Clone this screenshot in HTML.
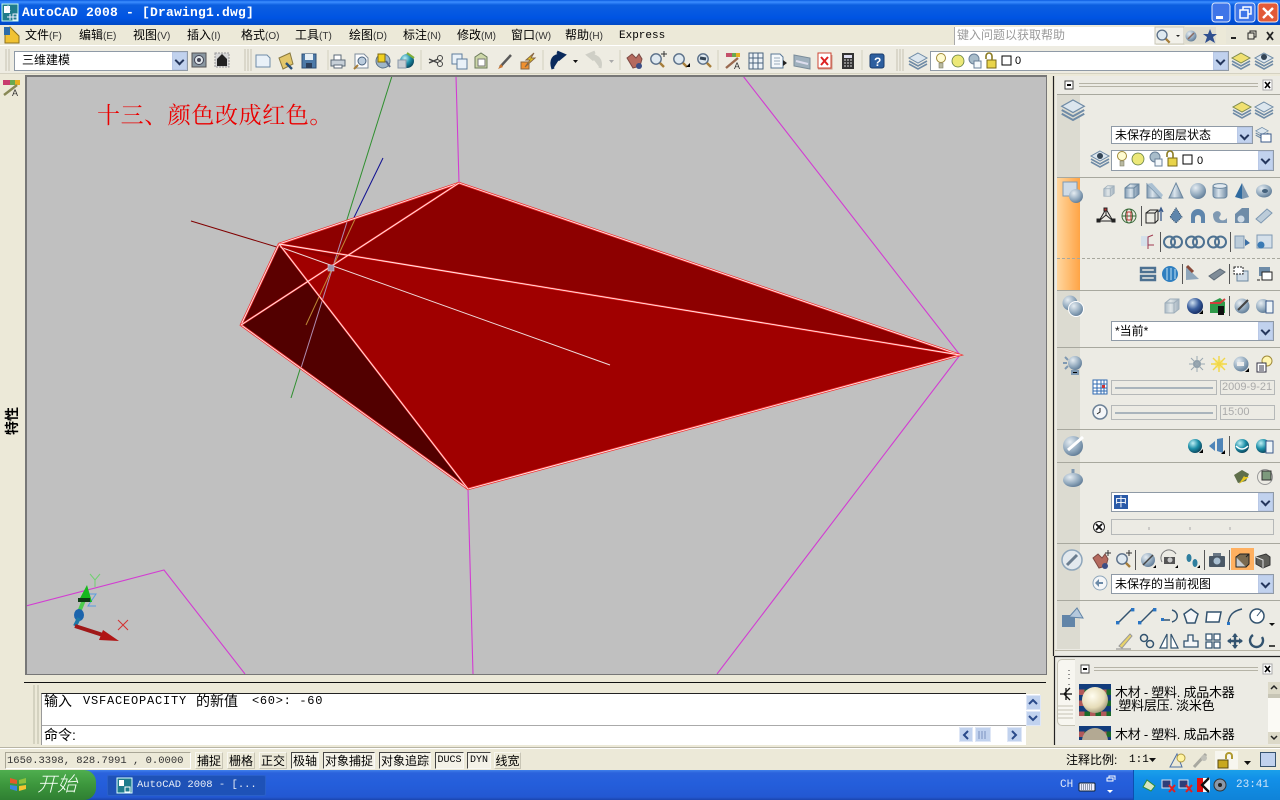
<!DOCTYPE html>
<html lang="zh"><head><meta charset="utf-8"><title>AutoCAD 2008</title>
<style>
html,body{margin:0;padding:0;width:1280px;height:800px;overflow:hidden;background:#ece9d8}
body{position:relative;font-family:"Liberation Sans","WenQuanYi Zen Hei","Noto Sans CJK SC",sans-serif;font-size:12px;color:#000}
div,span{position:absolute;box-sizing:border-box;white-space:nowrap}
.m{top:28px;font-size:12px;line-height:15px}
.m i{font-style:normal;font-size:10px;color:#333;position:static}
.combo{background:#fff;border:1px solid #8f9aa6;line-height:17px;padding-left:3px}
.dd{position:absolute;right:0;top:0;bottom:0;width:15px;background:#c1d2ee;border:1px solid #b9c8e6}
.dd:after{content:"";position:absolute;left:3px;top:4px;width:5px;height:5px;border:solid #24365c;border-width:0 2px 2px 0;transform:rotate(45deg)}
.sb{top:752px;height:17px;line-height:16px;text-align:center;font-size:12px;background:#ece9d8;border:1px solid #f8f7f0;border-bottom-color:#c8c5b5;border-right-color:#c8c5b5}
.on{border-color:#444 #f8f8f4 #f8f8f4 #444;background:#f4f2e8}
.sep{left:1057px;width:223px;height:1px;background:#a8a89e}
.mono{font-family:"Liberation Mono","WenQuanYi Zen Hei",monospace}
.scr{background:#c1d2ee;border:1px solid #dfe7f6}
.fld{background:#ecebe4;border:1px solid #b5b8b8;color:#aaa;font-size:11px;line-height:13px;padding-left:1px}
.tr{position:absolute;left:3px;right:3px;top:50%;height:2px;margin-top:-1px;background:#a9b4bc}
</style></head><body>
<div style="left:0;top:0;width:1280px;height:25px;background:linear-gradient(#0a5be0 0,#3c8eff 2px,#0c5fe0 5px,#0054e3 18px,#0049c5 25px)"></div>
<div class="mono" style="left:22px;top:5px;color:#fff;font-weight:bold;font-size:13px;letter-spacing:.2px;line-height:15px">AutoCAD 2008 - [Drawing1.dwg]</div>

<div class="m" style="left:25px">文件<i>(F)</i></div><div class="m" style="left:79px">编辑<i>(E)</i></div><div class="m" style="left:133px">视图<i>(V)</i></div><div class="m" style="left:187px">插入<i>(I)</i></div><div class="m" style="left:241px">格式<i>(O)</i></div><div class="m" style="left:295px">工具<i>(T)</i></div><div class="m" style="left:349px">绘图<i>(D)</i></div><div class="m" style="left:403px">标注<i>(N)</i></div><div class="m" style="left:457px">修改<i>(M)</i></div><div class="m" style="left:511px">窗口<i>(W)</i></div><div class="m" style="left:565px">帮助<i>(H)</i></div>
<div class="mono m" style="left:619px;font-size:11px;top:29px">Express</div>
<div style="left:954px;top:27px;width:202px;height:18px;background:#fff;border-left:1px solid #aaa;color:#9a9a9a;padding-left:2px;line-height:16px">键入问题以获取帮助</div>
<div style="left:0;top:45px;width:1280px;height:29px;background:#eeece2;border-top:1px solid #fff;border-bottom:1px solid #d5d2c2"></div>
<div class="combo" style="left:14px;top:51px;width:174px;height:20px;padding-left:7px">三维建模<span class="dd"></span></div>
<div class="combo" style="left:930px;top:51px;width:299px;height:20px"><span style="left:84px;top:1px;font-size:11px">0</span><span class="dd"></span></div>

<!-- left strip -->
<div style="left:-3px;top:414px;width:30px;height:14px;line-height:14px;font-size:14px;font-weight:bold;text-align:center;transform:rotate(-90deg)">特性</div>

<!-- viewport -->
<div style="left:25px;top:75px;width:1022px;height:600px;background:#c0c0c0;border:1px solid #777;border-width:2px 1px 1px 2px"></div>
<div style="left:97px;top:101px;font-family:'Liberation Serif','Noto Serif CJK SC',serif;font-size:23px;letter-spacing:.6px;line-height:30px;color:#ea0000">十三、颜色改成红色。</div>

<!-- command area -->
<div style="left:41px;top:693px;width:985px;height:52px;background:#fff;border-top:1px solid #222;border-left:1px solid #999"></div>
<div style="left:42px;top:725px;width:984px;height:1px;background:#aaa"></div>
<div style="left:1026px;top:694px;width:14px;height:32px;background:#fff"></div>
<div style="left:44px;top:694px;font-size:14px;line-height:15px">输入</div>
<div class="mono" style="left:83px;top:694px;font-size:12px;line-height:15px;letter-spacing:.8px">VSFACEOPACITY</div>
<div style="left:196px;top:694px;font-size:14px;line-height:15px">的新值</div>
<div class="mono" style="left:252px;top:694px;font-size:12px;line-height:15px;letter-spacing:.7px">&lt;60&gt;: -60</div>
<div style="left:44px;top:727px;font-size:14px;line-height:16px">命令:</div>
<div class="scr" style="left:1026px;top:695px;width:15px;height:15px"></div>
<div class="scr" style="left:1026px;top:711px;width:15px;height:15px"></div>
<div class="scr" style="left:959px;top:727px;width:14px;height:15px"></div>
<div class="scr" style="left:975px;top:727px;width:16px;height:15px"></div>
<div class="scr" style="left:1007px;top:727px;width:15px;height:15px"></div>

<!-- status bar -->
<div style="left:0;top:747px;width:1280px;height:1px;background:#b8b5a5"></div>
<div style="left:0;top:748px;width:1280px;height:1px;background:#fff"></div>
<div class="mono" style="left:5px;top:752px;width:186px;height:17px;border:1px solid;border-color:#a9a696 #fff #fff #a9a696;font-size:10.500px;line-height:16px;padding-left:1px;color:#333">1650.3398, 828.7991 , 0.0000</div>
<div class="sb" style="left:195px;width:28px">捕捉</div><div class="sb" style="left:227px;width:28px">栅格</div><div class="sb" style="left:259px;width:28px">正交</div>
<div class="sb on" style="left:291px;width:28px">极轴</div><div class="sb on" style="left:323px;width:52px">对象捕捉</div><div class="sb on" style="left:379px;width:52px">对象追踪</div>
<div class="sb on mono" style="left:435px;width:29px;font-size:10px">DUCS</div><div class="sb on mono" style="left:467px;width:24px;font-size:10px">DYN</div><div class="sb" style="left:494px;width:27px">线宽</div>
<div style="left:1066px;top:753px;line-height:15px">注释比例:</div>
<div class="mono" style="left:1129px;top:753px;line-height:15px;font-size:11px">1:1</div>
<div style="left:1215px;top:751px;width:23px;height:18px;background:#f7f6ef"></div>

<!-- taskbar -->
<div style="left:0;top:770px;width:1280px;height:30px;background:linear-gradient(#3f80ea 0,#2a62dc 3px,#245edb 14px,#2358d2 27px,#1a45ae 30px)"></div>
<div style="left:0;top:770px;width:96px;height:30px;background:linear-gradient(#4fae4f,#3c963c 50%,#2f7f32);border-radius:0 12px 12px 0"></div>
<div style="left:37px;top:772px;color:#f5fff5;font-size:20px;line-height:26px;font-style:italic;font-weight:300">开始</div>
<div style="left:107px;top:775px;width:159px;height:21px;background:#1e52b7;border-radius:2px;border:1px solid #2a60c8"></div>
<div class="mono" style="left:137px;top:778px;color:#e8eef8;font-size:10.500px;line-height:15px">AutoCAD 2008 - [...</div>
<div class="mono" style="left:1060px;top:778px;color:#e0e8f8;font-size:11px;line-height:15px">CH</div>
<div style="left:1133px;top:770px;width:147px;height:30px;background:linear-gradient(#1aa0ea,#1290e8 30%,#0f83d8);border-left:1px solid #0c4fb0"></div>
<div class="mono" style="left:1236px;top:778px;color:#cfe4f7;font-size:11px;line-height:15px">23:41</div>

<!-- right panel -->
<div style="left:1055px;top:76px;width:225px;height:580px;background:#ecebe4"></div>
<div style="left:1057px;top:95px;width:23px;height:554px;background:#dcdbd1"></div>
<div style="left:1057px;top:178px;width:23px;height:112px;background:linear-gradient(90deg,#ffd7a0,#ffa445)"></div>
<div class="sep" style="top:94px"></div><div class="sep" style="top:177px"></div><div class="sep" style="top:290px"></div><div class="sep" style="top:347px"></div><div class="sep" style="top:429px"></div><div class="sep" style="top:462px"></div><div class="sep" style="top:543px"></div><div class="sep" style="top:600px"></div>
<div style="left:1057px;top:258px;width:223px;border-top:1px dashed #a8a89e"></div>
<div style="left:1055px;top:650px;width:225px;height:1px;background:#b8b5a5"></div>
<div style="left:1231px;top:548px;width:23px;height:22px;background:#ffb060"></div>
<div class="combo" style="left:1111px;top:126px;width:142px;height:18px;font-size:12px;line-height:16px">未保存的图层状态<span class="dd"></span></div>
<div class="combo" style="left:1111px;top:150px;width:163px;height:21px"><span style="left:85px;top:2px;font-size:11px">0</span><span class="dd"></span></div>
<div class="combo" style="left:1111px;top:321px;width:163px;height:20px;line-height:18px">*当前*<span class="dd"></span></div>
<div class="fld" style="left:1111px;top:380px;width:106px;height:15px"><span class="tr"></span></div>
<div class="fld" style="left:1220px;top:380px;width:55px;height:15px">2009-9-21</div>
<div class="fld" style="left:1111px;top:405px;width:106px;height:15px"><span class="tr"></span></div>
<div class="fld" style="left:1220px;top:405px;width:55px;height:15px">15:00</div>
<div class="combo" style="left:1111px;top:492px;width:163px;height:20px"><span style="left:2px;top:2px;width:14px;height:14px;background:#2a5aa8;color:#fff;line-height:14px;text-align:center">中</span><span class="dd"></span></div>
<div class="fld" style="left:1111px;top:519px;width:163px;height:16px"></div>
<div class="combo" style="left:1111px;top:574px;width:163px;height:20px;line-height:18px">未保存的当前视图<span class="dd"></span></div>

<!-- material palette -->
<div style="left:1055px;top:657px;width:225px;height:88px;background:#ecebe4"></div>
<div style="left:1057px;top:659px;width:18px;height:67px;background:#f7f6f0;border:1px solid #c5c3b5;border-radius:5px 0 0 5px;border-right:0"></div>
<div style="left:1115px;top:686px;font-size:13px;letter-spacing:-.25px;line-height:14px">木材 - 塑料. 成品木器</div>
<div style="left:1115px;top:699px;font-size:13px;letter-spacing:-.25px;line-height:14px">.塑料层压. 淡米色</div>
<div style="left:1115px;top:728px;font-size:13px;letter-spacing:-.25px;line-height:14px">木材 - 塑料. 成品木器</div>
<div style="left:1079px;top:684px;width:32px;height:32px;background:repeating-conic-gradient(#123c7c 0 25%,#1a6a2a 0 50%,#b0595a 0 75%,#123c7c 0 100%) 0 0/11px 11px"></div>
<div style="left:1079px;top:726px;width:32px;height:14px;background:repeating-conic-gradient(#123c7c 0 25%,#1a6a2a 0 50%,#b0595a 0 75%,#123c7c 0 100%) 0 0/11px 11px;overflow:hidden"><span style="left:3px;top:2px;width:26px;height:26px;border-radius:50%;background:#b3a993"></span></div>
<div style="left:1268px;top:682px;width:12px;height:62px;background:#fbfaf5"></div>
<div style="left:1268px;top:682px;width:12px;height:12px;background:#dcd9c8"></div>
<div style="left:1268px;top:694px;width:12px;height:4px;background:#c7c5b5"></div>
<div style="left:1268px;top:732px;width:12px;height:12px;background:#dcd9c8"></div>

<svg style="position:absolute;left:0;top:0" width="1280" height="800" viewBox="0 0 1280 800">
<defs>
<radialGradient id="gs" cx=".35" cy=".3" r=".8"><stop offset="0" stop-color="#e6edf2"/><stop offset=".6" stop-color="#8ea6bb"/><stop offset="1" stop-color="#56728e"/></radialGradient>
<radialGradient id="gb" cx=".35" cy=".3" r=".8"><stop offset="0" stop-color="#cfe0f0"/><stop offset=".5" stop-color="#3b5f9e"/><stop offset="1" stop-color="#0d2257"/></radialGradient>
<radialGradient id="gt" cx=".35" cy=".3" r=".8"><stop offset="0" stop-color="#bff0f5"/><stop offset=".5" stop-color="#1d8fa8"/><stop offset="1" stop-color="#08384f"/></radialGradient>
<radialGradient id="gm" cx=".4" cy=".35" r=".75"><stop offset="0" stop-color="#fffdf0"/><stop offset=".6" stop-color="#e6dcb8"/><stop offset="1" stop-color="#8d8468"/></radialGradient>
<linearGradient id="gc" x1="0" x2="1"><stop offset="0" stop-color="#7f99b2"/><stop offset=".4" stop-color="#dbe5ec"/><stop offset="1" stop-color="#6f8aa4"/></linearGradient>
<g id="lay"><path d="M0-8 9-3 0 2-9-3Z" fill="#dce6ee" stroke="#6f8ba6"/><path d="M-9 0 0 5 9 0M-9 3 0 8 9 3" fill="none" stroke="#6f8ba6" stroke-width="1.6"/></g>
<g id="layy"><path d="M0-8 9-3 0 2-9-3Z" fill="#f0e070" stroke="#7d8a50"/><path d="M-9 0 0 5 9 0M-9 3 0 8 9 3" fill="none" stroke="#6f8ba6" stroke-width="1.6"/></g>
<g id="cube"><path d="M-7-3-2-7H7V3L2 7H-7Z" fill="url(#gc)" stroke="#6b879f"/><path d="M-7-3H2V7M2-3 7-7" fill="none" stroke="#6b879f"/></g>
<g id="sph"><circle r="8" fill="url(#gs)"/></g>
<g id="cyl"><rect x="-7" y="-7" width="14" height="14" rx="3" fill="url(#gc)" stroke="#6b879f"/><ellipse cy="-5" rx="7" ry="2.400" fill="#e2eaf0" stroke="#6b879f"/></g>
<g id="tri"><path d="M0-8 7 7H-7Z" fill="url(#gc)" stroke="#6c879f"/></g>
<g id="tor"><ellipse rx="8" ry="6.500" fill="url(#gs)"/><ellipse cx="1" rx="3" ry="2" fill="#44617c"/></g>
<g id="bub"><circle r="7" fill="url(#gt)"/><path d="M4 7 8 3V7Z" fill="#000"/></g>
<g id="rings"><circle cx="-3.500" r="5.500" fill="none" stroke="#4d7191" stroke-width="2"/><circle cx="3.500" r="5.500" fill="none" stroke="#4d7191" stroke-width="2"/></g>
<g id="bulb"><circle cy="-3" r="4.500" fill="#fffbd0" stroke="#a08a3a"/><rect x="-2" y="2" width="4" height="5" fill="#b9b9a0" stroke="#80806a" stroke-width=".6"/></g>
<g id="sun"><circle r="7.500" fill="#ece878" stroke="#5f7a40"/></g>
<g id="lock"><rect x="-5" y="-1" width="9" height="8" fill="#e9d44a" stroke="#7a6a18"/><path d="M-6-2V-5A3 3 0 0 1 0-5V-1" fill="none" stroke="#8a7a20" stroke-width="1.600"/></g>
<g id="doc"><path d="M-6-7H3L6-4V7H-6Z" fill="#f4f8fb" stroke="#5a7896"/><path d="M-3-3H3M-3 0H3M-3 3H3" stroke="#99aabb"/></g>
<g id="mag"><circle cx="-1" cy="-1" r="5.200" fill="#dfe9f0" stroke="#5a6f88" stroke-width="1.400"/><path d="M3 3 7 7" stroke="#a67e3a" stroke-width="2.400"/></g>
<g id="hand"><path d="M-8-3-3-7 1-3 4-7 7-2 5 5-2 7Z" fill="#b56a5e" stroke="#7c4a44"/><circle cx="4" cy="5" r="3" fill="#3c4f86"/></g>
<g id="pgrey"><path d="M-6-7H3L7-3V7H-6Z" fill="#fbfcfe" stroke="#7d8b9b"/></g>
<g id="lin"><path d="M-7 7 7-7" stroke="#33536f" stroke-width="1.500"/><rect x="-9" y="5" width="3.400" height="3.400" fill="#2a75c4"/><rect x="6" y="-8" width="3.400" height="3.400" fill="#2a75c4"/></g>
</defs>

<!-- title icon & window buttons -->
<rect x="2" y="4" width="16" height="17" fill="#1f7c8c" stroke="#cfe"/><rect x="4" y="6" width="6" height="7" fill="#fff"/><path d="M6 11 8 6 10 11M10 14V20M7 17H17M13 14H17V20H13Z" stroke="#eef" fill="none"/>
<rect x="1212" y="3" width="18" height="19" rx="3" fill="#3f75e8" stroke="#dce7fb"/><rect x="1216" y="16" width="7" height="3" fill="#fff"/>
<rect x="1235" y="3" width="20" height="19" rx="3" fill="#3f75e8" stroke="#dce7fb"/><path d="M1240 10H1248V18H1240ZM1243 10V7H1251V14H1248" fill="none" stroke="#fff" stroke-width="1.500"/>
<rect x="1258" y="3" width="20" height="19" rx="3" fill="#e25a38" stroke="#fbe5dc"/><path d="M1263 8 1273 18M1273 8 1263 18" stroke="#fff" stroke-width="2.400"/>

<!-- menu icon -->
<path d="M5 43V30L10 27 19 36V43Z" fill="#f1c232" stroke="#8a7020"/><rect x="4" y="27" width="6" height="8" fill="#2d6ca8"/>
<!-- help area -->
<rect x="1155" y="27" width="29" height="17" fill="#f2f1ea" stroke="#c9c7b8"/>
<use href="#mag" transform="translate(1163,36) scale(.95)"/><path d="M1176 35h4l-2 2z" fill="#222"/>
<rect x="1184" y="27" width="32" height="17" fill="#dfddd0"/>
<circle cx="1191" cy="36" r="5.500" fill="url(#gs)"/><path d="M1188 39 1194 33" stroke="#8a6a60" stroke-width="1.500"/><path d="M1210 29l2 5h5l-4 3 2 6-5-3-5 3 2-6-4-3h5z" fill="#2f4f8f"/>
<rect x="1226" y="27" width="54" height="17" fill="#e8e6d8"/>
<path d="M1231 38h5" stroke="#222" stroke-width="2"/><path d="M1248 33h6v6h-6zM1250 33v-2h6v6h-2" fill="none" stroke="#222"/><path d="M1267 32 1273 40M1273 32 1267 40" stroke="#222" stroke-width="1.800"/>

<!-- toolbar grips -->
<path d="M6 49V71M9 49V71M245 49V71M248 49V71M251 49V71M897 49V71M900 49V71M903 49V71" stroke="#c5c2b2"/>
<path d="M328 50V70M421 50V70M543 50V70M620 50V70M718 50V70M862 50V70" stroke="#d2cfbf"/>
<!-- toolbar icons -->
<g transform="translate(199,60)"><rect x="-7" y="-7" width="14" height="14" fill="#8a98a2" stroke="#555"/><circle r="4.500" fill="#dfe6ea" stroke="#445"/><circle r="2" fill="#445"/></g>
<g transform="translate(222,60)"><rect x="-7" y="-7" width="14" height="14" fill="#d8d8d8" stroke="#999" stroke-dasharray="2 1"/><path d="M-5 6V-1L0-6 5-1V6Z" fill="#222"/></g>
<g transform="translate(263,61)"><path d="M-7-6H4L7-3V6H-7Z" fill="#e9f1f8" stroke="#6f8ca8"/></g>
<g transform="translate(286,61)"><path d="M-7-3 4-8 7 3-3 8Z" fill="#e2c66a" stroke="#8a7a40"/><path d="M0 2 6 8" stroke="#274f7a" stroke-width="2.400"/></g>
<g transform="translate(309,61)"><rect x="-7" y="-7" width="14" height="14" fill="#4d7aa8" stroke="#2d4f77"/><rect x="-4" y="-7" width="8" height="6" fill="#e5eef5"/><rect x="-3" y="2" width="6" height="5" fill="#2b3f5c"/></g>
<g transform="translate(338,61)"><rect x="-7" y="-1" width="14" height="6" fill="#c7d0d8" stroke="#5c6a78"/><rect x="-4" y="-6" width="7" height="5" fill="#fff" stroke="#5c6a78"/><rect x="-4" y="4" width="8" height="3" fill="#fff" stroke="#5c6a78"/></g>
<g transform="translate(361,61)"><use href="#pgrey"/><circle cx="1" cy="0" r="4" fill="#bcd" stroke="#48617c"/><path d="M-3 4-7 8" stroke="#a67e3a" stroke-width="2"/></g>
<g transform="translate(383,61)"><circle r="7" fill="#9fb6c9" stroke="#5a7288"/><rect x="-5" y="-7" width="7" height="8" fill="#f0d020" stroke="#806a10"/><path d="M3 0 7 6" stroke="#55678a" stroke-width="2"/></g>
<g transform="translate(407,61)"><circle r="7" fill="url(#gt)"/><rect x="-9" y="-1" width="8" height="8" fill="#c8cdd2" stroke="#8a98a8"/><path d="M0-8 7-3" stroke="#7fae3a" stroke-width="2"/></g>
<g transform="translate(436,61)" fill="none" stroke="#444"><circle cx="4" cy="-3" r="2.500"/><circle cx="4" cy="3" r="2.500"/><path d="M2-2-7 2M2 2-7-2" stroke-width="1.300"/></g>
<g transform="translate(459,61)"><rect x="-7" y="-7" width="10" height="10" fill="#e9f1f8" stroke="#5e7d9c"/><rect x="-2" y="-2" width="10" height="10" fill="#e9f1f8" stroke="#5e7d9c"/></g>
<g transform="translate(481,61)"><path d="M-6-4 0-8 6-4V7H-6Z" fill="#cdd7a8" stroke="#6b7a5a"/><rect x="-3" y="-2" width="7" height="7" fill="#fff" stroke="#777"/></g>
<g transform="translate(505,61)"><path d="M-5 6 6-6" stroke="#5a5a5a" stroke-width="2.500"/><path d="M-7 8-4 3-2 6Z" fill="#c73"/></g>
<g transform="translate(528,61)"><rect x="-7" y="1" width="8" height="7" fill="#f09030" stroke="#864"/><path d="M6-8-2-1H2L-3 6 7-3H3Z" fill="#e8c820" stroke="#864"/></g>
<path d="M553 69C550 60 553 55 562 55M557 52 564 55 558 60" fill="#0a2a5c" stroke="#0a2a5c" stroke-width="3"/><path d="M573 60h5l-2.500 3z" fill="#111"/>
<path d="M600 68C602 60 598 56 590 55M595 52 588 55 594 60" fill="#cfcfc6" stroke="#cfcfc6" stroke-width="3"/><path d="M609 60h5l-2.500 3z" fill="#aaa"/>
<use href="#hand" transform="translate(635,61)"/>
<use href="#mag" transform="translate(657,60)"/><path d="M661 54h6M664 51v6" stroke="#333"/>
<use href="#mag" transform="translate(680,60)"/><path d="M686 67h4v-4z" fill="#000"/>
<use href="#mag" transform="translate(704,60)"/><path d="M700 58l6 1" stroke="#345" stroke-width="3"/>
<g transform="translate(733,61)"><rect x="-7" y="-8" width="14" height="4" fill="#c4506a"/><rect x="-1" y="-8" width="4" height="4" fill="#6aa84f"/><rect x="3" y="-8" width="4" height="4" fill="#e6b020"/><path d="M-7 7 5-3" stroke="#9a6a50" stroke-width="2.400"/><text x="1" y="8" font-size="9" font-family="Liberation Sans" fill="#333">A</text></g>
<g transform="translate(756,61)"><rect x="-7" y="-8" width="14" height="16" fill="#eef3f7" stroke="#48627c"/><path d="M-3-8V8M2-8V8M-7-3H7M-7 2H7" stroke="#48627c"/></g>
<g transform="translate(779,61)"><use href="#doc" transform="translate(-2,0)"/><path d="M4-1 8 2 4 5Z" fill="#222"/></g>
<g transform="translate(802,61)"><path d="M-8-6 8-3V8L-8 5Z" fill="#9fb0bd" stroke="#7a8c9a"/><path d="M-6 0 6 3" stroke="#dde" stroke-width="2"/></g>
<g transform="translate(825,61)"><rect x="-7" y="-8" width="13" height="15" fill="#fff" stroke="#c43"/><path d="M-4-4 3 4M3-4-4 4" stroke="#d22" stroke-width="2"/><path d="M-7 8H7V-6" fill="none" stroke="#c98"/></g>
<g transform="translate(848,61)"><rect x="-6" y="-8" width="12" height="16" fill="#333"/><rect x="-4" y="-6" width="8" height="3" fill="#dde"/><path d="M-4-1H4M-4 2H4M-4 5H4" stroke="#ddd" stroke-dasharray="2 1"/></g>
<g transform="translate(877,61)"><rect x="-7" y="-7" width="14" height="14" rx="2" fill="#2d5f9f" stroke="#1b3d6e"/><text x="-3" y="5" font-size="12" font-weight="bold" font-family="Liberation Sans" fill="#fff">?</text></g>
<use href="#lay" transform="translate(918,61)"/>
<use href="#bulb" transform="translate(941,61)"/><use href="#sun" transform="translate(958,61) scale(.8)"/><g transform="translate(974,61)"><circle cy="-2" r="5" fill="#a8bcca" stroke="#6a8098"/><rect x="0" y="0" width="7" height="7" fill="#f4f8fb" stroke="#6a8098"/></g><use href="#lock" transform="translate(992,61)"/><rect x="1002" y="56" width="9" height="9" fill="#fff" stroke="#000"/>
<use href="#layy" transform="translate(1241,61)"/><g transform="translate(1264,61)"><use href="#lay"/><circle cy="-4" r="3" fill="#345"/></g>

<!-- left strip icon -->
<g transform="translate(11,88)"><rect x="-8" y="-8" width="16" height="5" fill="#c83a6e"/><rect x="-1" y="-8" width="5" height="5" fill="#6aa84f"/><rect x="4" y="-8" width="5" height="5" fill="#e6b020"/><path d="M-7 7 6-3" stroke="#885" stroke-width="2.400"/><text x="1" y="8" font-size="9" font-family="Liberation Sans" fill="#333">A</text></g>

<!-- model -->
<clipPath id="vp"><rect x="27" y="77" width="1019" height="597"/></clipPath>
<g clip-path="url(#vp)">
<g fill="none" stroke="#d23cd2" stroke-width="1.100">
<path d="M456 76 459 183M743 76 960 355 717 674M468 489 473 674M26 606 164 570 245 674"/></g>
<path d="M392 76 291 398" stroke="#2f8f2f" stroke-width="1"/>
<path d="M383 158 345 236" stroke="#101090" stroke-width="1"/>
<path d="M191 221 280 248" stroke="#800000"/>
<path d="M459 183 960 355 468 489 241 325 279 244Z" fill="#a00000"/>
<path d="M279 244 459 183 960 355Z" fill="#8d0000"/>
<path d="M279 244 241 325 468 489Z" fill="#520000"/>
<path d="M279 244 241 325 309 281Z" fill="#5c0000"/>
<path d="M279 244 309 281 341 260Z" fill="#a00000"/>
<path d="M279 244 459 183 341 260Z" fill="#8d0000"/>
<path d="M347 222 301 368" stroke="#b08cb0" stroke-width="1"/>
<path d="M356 217 306 325" stroke="#c8963c" stroke-width="1" opacity=".9"/>
<path d="M280 247 610 365" stroke="#efdcdc" stroke-width="1"/>
<path d="M459 183 960 355 468 489 241 325 279 244Z" fill="none" stroke="#f03030" stroke-width="2.400"/>
<path d="M459 183 960 355 468 489 241 325 279 244Z" fill="none" stroke="#ffe8e8" stroke-width=".9"/>
<path d="M241 325 459 183M279 244 960 355M279 244 468 489" stroke="#f03030" stroke-width="2" fill="none"/>
<path d="M241 325 459 183M279 244 960 355M279 244 468 489" stroke="#ffeaea" stroke-width=".9" fill="none"/>
<rect x="328" y="265" width="6" height="6" fill="#a090a8" stroke="#d0c0d0" stroke-width=".6"/>
<!-- UCS -->
<path d="M90 574 95 580 100 574M95 580V587" stroke="#6fd06f" fill="none"/>
<path d="M88 594H96L88 606H96" stroke="#5a9de0" fill="none"/>
<path d="M118 620 128 630M128 620 118 630" stroke="#d43030" fill="none"/>
<path d="M79 612 84 600" stroke="#4ccc4c" stroke-width="4"/>
<path d="M87 585 92 602 78 602Z" fill="#17b81e"/><rect x="78" y="598" width="12" height="4" fill="#0e3c14"/>
<ellipse cx="79" cy="615" rx="5" ry="6" fill="#1c64ac"/><path d="M79 618 75 626" stroke="#1c78a8" stroke-width="4"/>
<path d="M75 626 106 636" stroke="#a01818" stroke-width="4"/><path d="M103 630 119 641 99 640Z" fill="#b01414"/>
</g>

<!-- command -->
<path d="M24 682.500H1046" stroke="#111"/>
<path d="M34 685V744M38 685V744" stroke="#bdbaa9"/>
<g fill="none" stroke="#2a4a8a" stroke-width="2"><path d="M1029 704 1033 700 1037 704M1029 716 1033 720 1037 716M968 731 964 735 968 739M1012 731 1016 735 1012 739"/></g>
<path d="M979 731V739M982 731V739M985 731V739" stroke="#7a93c0"/>

<!-- right panel lines -->
<path d="M1053.500 76V656M1055 656.500H1280M1054.500 656V745" stroke="#222" stroke-width="1.200"/>
<!-- panel titlebars -->
<g><rect x="1065" y="81" width="8" height="8" fill="#fff" stroke="#444"/><path d="M1067 85h4" stroke="#000" stroke-width="2"/><path d="M1079 83.500H1258M1079 86.500H1258" stroke="#b5b3a6"/><rect x="1263" y="80" width="9" height="10" fill="#fff" stroke="#aaa"/><path d="M1265 82 1270 88M1270 82 1265 88" stroke="#000" stroke-width="1.600"/></g>
<g><rect x="1081" y="665" width="8" height="8" fill="#fff" stroke="#444"/><path d="M1083 669h4" stroke="#000" stroke-width="2"/><path d="M1094 667.500H1258M1094 670.500H1258" stroke="#b5b3a6"/><rect x="1263" y="664" width="9" height="10" fill="#fff" stroke="#aaa"/><path d="M1265 666 1270 672M1270 666 1265 672" stroke="#000" stroke-width="1.600"/></g>
<path d="M1069 670V680M1069 684V690" stroke="#333" stroke-dasharray="1 3"/>
<path d="M1060 694H1072M1070 688 1064 694 1070 700M1066 688V700" fill="none" stroke="#111" stroke-width="1.300"/>
<path d="M1058 706H1073M1058 710H1073M1058 714H1073M1058 718H1073" stroke="#c5c3b5"/>
<circle cx="1095" cy="700" r="13" fill="url(#gm)"/>
<path d="M1271 689l3-3 3 3M1271 736l3 3 3-3" fill="none" stroke="#222" stroke-width="1.500"/>

<!-- gutter icons -->
<use href="#lay" transform="translate(1073,110) scale(1.250)"/>
<g transform="translate(1073,192)"><rect x="-10" y="-10" width="14" height="14" fill="#cfdbe6" stroke="#7f99b2"/><circle cx="3" cy="4" r="7" fill="url(#gs)"/></g>
<g transform="translate(1073,306)"><circle cx="-3" cy="-3" r="7.500" fill="url(#gs)"/><circle cx="3" cy="3" r="7.500" fill="url(#gs)" stroke="#fff"/></g>
<g transform="translate(1073,364)"><circle cx="2" cy="-1" r="7" fill="url(#gs)"/><path d="M-10-1H-6M-8-7-5-4M-8 5-5 2M-1 7H5V10H-1Z" stroke="#7f99b2" stroke-width="2"/></g>
<g transform="translate(1073,446)"><circle r="10" fill="url(#gs)"/><path d="M-5 4 10-9" stroke="#fff" stroke-width="3"/></g>
<g transform="translate(1073,477)"><ellipse cy="3" rx="10" ry="7" fill="url(#gs)"/><path d="M0-8V-4" stroke="#7f99b2" stroke-width="3"/></g>
<g transform="translate(1072,560)"><circle r="10" fill="#e3e9ee" stroke="#8ea6bb" stroke-width="1.500"/><path d="M-5 5 5-5" stroke="#6b7d8f" stroke-width="3"/></g>
<g transform="translate(1073,618)"><path d="M-11-3H2V9H-11Z" fill="#6285a8"/><path d="M-4-1 4-10 10 0Z" fill="#b5c9dc" stroke="#6285a8"/></g>

<!-- layers section -->
<use href="#layy" transform="translate(1242,110)"/><use href="#lay" transform="translate(1264,110)"/>
<g transform="translate(1264,135)"><use href="#lay" transform="translate(-2,-2) scale(.7)"/><rect x="-3" y="-1" width="10" height="8" fill="#fff" stroke="#3a5a8a"/></g>
<g transform="translate(1100,159)"><use href="#lay"/><circle cy="-3" r="3" fill="#345"/></g>
<use href="#bulb" transform="translate(1122,159)"/><use href="#sun" transform="translate(1138,159) scale(.8)"/><g transform="translate(1155,159)"><circle cy="-2" r="5" fill="#a8bcca" stroke="#6a8098"/><rect x="0" y="0" width="7" height="7" fill="#f4f8fb" stroke="#6a8098"/></g><use href="#lock" transform="translate(1173,159)"/><rect x="1183" y="155" width="9" height="9" fill="#fff" stroke="#000"/>

<!-- 3D row 1 -->
<g transform="translate(1109,191) scale(.75)"><use href="#cube" opacity=".6"/></g>
<use href="#cube" transform="translate(1132,191)"/>
<g transform="translate(1154,191)"><path d="M-7-7-7 7H7Z" fill="url(#gc)" stroke="#6c879f"/><path d="M-7-7-2-8 9 4 7 7Z" fill="#aac0d2"/></g>
<use href="#tri" transform="translate(1176,191)"/><use href="#sph" transform="translate(1198,191)"/><use href="#cyl" transform="translate(1220,191)"/>
<g transform="translate(1242,191)"><path d="M0-8 7 6 0 8Z" fill="#7f99b2"/><path d="M0-8-7 6 0 8Z" fill="#2f6a9f"/></g>
<use href="#tor" transform="translate(1264,191)"/>
<!-- row 2 -->
<g transform="translate(1106,216)" fill="none" stroke="#222"><path d="M0-7 7 5H-7ZM0-1V-7M0-1 7 5M0-1-7 5"/><rect x="-9" y="3" width="3" height="3" fill="#222"/><rect x="6" y="3" width="3" height="3" fill="#222"/><rect x="-2" y="-8" width="3" height="3" fill="#b33"/></g>
<g transform="translate(1129,216)" fill="none" stroke="#3a6a3a"><circle r="7"/><ellipse rx="3.500" ry="7"/><path d="M-7 0H7"/><rect x="-2" y="-4" width="4" height="8" stroke="#b33"/></g>
<path d="M1141.500 206V226" stroke="#555"/>
<g transform="translate(1153,216)" fill="none" stroke="#222"><path d="M-7-3H2V7H-7ZM-7-3-3-6H5V4L2 7M2-3 5-6"/><path d="M8 5V-7M6-4 8-8 10-4" stroke="#3a5a8a" stroke-width="1.300"/></g>
<g transform="translate(1176,216)"><path d="M0-8 6 1 0 7-6 1Z" fill="#5f86ac" stroke="#334e6a" stroke-dasharray="1 1"/></g>
<g transform="translate(1198,216)"><path d="M-7 7V0A7 7 0 0 1 7 0V7H3V2A3 3 0 0 0-3 2V7Z" fill="#5f86ac"/></g>
<g transform="translate(1220,216)"><path d="M-7-2C-3-8 3-3 0 0S3 7 7 2V7H0C-6 7-7 2-7-2Z" fill="#7f99b2"/></g>
<g transform="translate(1242,216)"><path d="M-7 7V-2L0-8H7V7Z" fill="#6f8ca8"/><circle cx="-1" cy="3" r="3.500" fill="#cfdbe6"/></g>
<g transform="translate(1264,216)"><path d="M-8 3 3-7 8-3-3 7Z" fill="#bcccd9" stroke="#7f99b2"/></g>
<!-- row 3 -->
<g transform="translate(1147,242)"><rect x="-6" y="-6" width="8" height="10" fill="#d5e0ea"/><path d="M1 7V-5L6-7M1 3H7" fill="none" stroke="#a03a50"/></g>
<path d="M1160.500 232V252M1230.500 232V252M1182.500 264V284M1229.500 264V284M1229.500 296V316M1229.500 436V456M1135.500 550V570M1204.500 550V570M1229.500 550V570" stroke="#555"/>
<use href="#rings" transform="translate(1173,242)"/><use href="#rings" transform="translate(1195,242)"/><use href="#rings" transform="translate(1217,242)"/>
<g transform="translate(1242,242)"><rect x="-7" y="-6" width="9" height="12" fill="#bcccd9" stroke="#7f99b2"/><path d="M3-3 8 1 3 4Z" fill="#3a6ea5"/></g>
<g transform="translate(1264,242)"><rect x="-7" y="-7" width="15" height="13" fill="#d5e0ea" stroke="#7f99b2"/><circle cx="-3" cy="3" r="3.500" fill="#3a7ab5"/></g>
<!-- row 4 -->
<g transform="translate(1148,274)" fill="none" stroke="#4d7191" stroke-width="2.400"><path d="M-7-6H7V-2H-7ZM-7 2H7V6H-7Z"/></g>
<g transform="translate(1170,274)"><circle r="8" fill="#2f7fc0"/><path d="M-3-6V6M1-6V6M5-5V5" stroke="#bfe0f5"/></g>
<g transform="translate(1193,274)"><path d="M-7-7 6 5-7 6Z" fill="#8ea6bb"/><path d="M-6-8 0-2" stroke="#884a3a" stroke-width="3"/></g>
<g transform="translate(1217,274)"><path d="M-8 2 3-5 8-2-3 6Z" fill="#7f8c98" stroke="#5f6c78"/></g>
<g transform="translate(1242,274)"><rect x="-5" y="-3" width="11" height="10" fill="#cfdbe6" stroke="#6b879f"/><rect x="-8" y="-7" width="9" height="7" fill="#fff" stroke="#222" stroke-dasharray="2 1"/></g>
<g transform="translate(1265,274)"><rect x="-6" y="-7" width="11" height="9" fill="#6f8ca8"/><rect x="-3" y="-2" width="10" height="8" fill="#fff" stroke="#222"/><path d="M-8 6H-5" stroke="#222"/></g>
<!-- row 5 materials -->
<use href="#cube" transform="translate(1172,306)" opacity=".6"/>
<g transform="translate(1195,306)"><circle r="8" fill="url(#gb)"/><path d="M4 8 8 4V8Z" fill="#000"/></g>
<g transform="translate(1217,306)"><path d="M-7-3 3-8 8-4V7H-7Z" fill="#2f9a4a"/><path d="M-7-3H3L8-7" fill="none" stroke="#d43c3c" stroke-width="2"/><rect x="1" y="0" width="6" height="9" fill="#111"/></g>
<g transform="translate(1242,306)"><circle r="7.500" fill="url(#gs)"/><path d="M-4 4 6-6" stroke="#444" stroke-width="2"/></g>
<g transform="translate(1265,306)"><circle cx="-2" r="7" fill="url(#gs)"/><rect x="1" y="-5" width="7" height="12" fill="#eef4f8" stroke="#3a5a8a"/></g>
<!-- lights -->
<g transform="translate(1197,364)"><circle r="4" fill="#8899a5"/><path d="M-8 0H8M0-8V8M-6-6 6 6M6-6-6 6" stroke="#9aa8b2"/></g>
<g transform="translate(1219,364)"><circle r="4.500" fill="#fbeb8a"/><path d="M-8 0H8M0-8V8M-6-6 6 6M6-6-6 6" stroke="#f1d74a" stroke-width="1.400"/></g>
<g transform="translate(1241,364)"><circle r="7.500" fill="url(#gs)"/><rect x="-4" y="-2" width="7" height="4" fill="#eee"/><path d="M4 8 8 4V8Z" fill="#000"/></g>
<g transform="translate(1264,364)"><circle cx="3" cy="-3" r="5" fill="#fff6b0" stroke="#a08a3a"/><rect x="-7" y="-1" width="9" height="9" fill="#fff" stroke="#334"/><path d="M-5 2H0M-5 4H0M-5 6H0" stroke="#334"/></g>
<g transform="translate(1100,387)"><rect x="-7" y="-7" width="14" height="14" fill="#fff" stroke="#2f6ab0"/><path d="M-3-7V7M1-7V7M4-7V7M-7-3H7M-7 1H7M-7 4H7" stroke="#2f6ab0"/><rect x="2" y="-2" width="3" height="3" fill="#c33"/></g>
<g transform="translate(1100,412)"><circle r="7" fill="#f4f6f8" stroke="#6b8096" stroke-width="1.500"/><path d="M0-4V0L-3 2" stroke="#222" fill="none"/></g>
<!-- render row -->
<use href="#bub" transform="translate(1195,446)"/>
<g transform="translate(1217,446)"><path d="M-8 0-2-5V5ZM0-7 6-8V7L0 5Z" fill="#4f85b8"/><path d="M4 8 8 4V8Z" fill="#000"/></g>
<g transform="translate(1242,446)"><circle r="7" fill="url(#gt)"/><path d="M-6 0C-2 4 2 4 6 0" stroke="#fff" stroke-width="1.500" fill="none"/></g>
<g transform="translate(1265,446)"><circle cx="-2" r="7" fill="url(#gt)"/><rect x="1" y="-5" width="7" height="12" fill="#eef4f8" stroke="#3a5a8a"/></g>
<g transform="translate(1242,477)"><path d="M-8-2 0-7 7-3 4 4-4 6Z" fill="#5f6f4a"/><path d="M2-1-3 7 7 0H3Z" fill="#e8c820"/></g>
<g transform="translate(1265,477)"><circle r="7.500" fill="none" stroke="#999"/><rect x="-3" y="-6" width="9" height="9" fill="#7d9a7d" stroke="#333"/></g>
<g transform="translate(1099,527)"><circle r="5.500" fill="#fff" stroke="#222"/><path d="M-3-3 3 3M3-3-3 3" stroke="#111" stroke-width="1.800"/></g>
<path d="M1149 530v-3M1190 530v-3M1230 530v-3" stroke="#aaa"/>
<!-- nav row -->
<use href="#hand" transform="translate(1101,561)"/><path d="M1105 553h6M1108 550v6" stroke="#333"/>
<use href="#mag" transform="translate(1123,560)"/><path d="M1126 553h6M1129 550v6" stroke="#333"/>
<g transform="translate(1148,560)"><circle r="7" fill="url(#gs)"/><path d="M-5 5 5-5" stroke="#444" stroke-width="1.500"/><path d="M5 8 8 5V8Z" fill="#000"/></g>
<g transform="translate(1170,560)"><rect x="-6" y="-3" width="11" height="7" fill="#555"/><circle cx="0" cy="0" r="2.500" fill="#ccc"/><path d="M-8 2A8 8 0 0 1 6-6" fill="none" stroke="#777"/><path d="M5 8 8 5V8Z" fill="#000"/></g>
<g transform="translate(1192,560)"><ellipse cx="-3" cy="-2" rx="2.500" ry="4" fill="#2f7f9f"/><ellipse cx="3" cy="3" rx="2.500" ry="4" fill="#2f7f9f"/><path d="M5 8 8 5V8Z" fill="#000"/></g>
<g transform="translate(1217,560)"><rect x="-8" y="-4" width="16" height="11" rx="1" fill="#4a5866"/><circle cy="1" r="3.500" fill="#aac0d2"/><rect x="-4" y="-7" width="8" height="3" fill="#6a7886"/></g>
<g transform="translate(1242,560)"><rect x="-6" y="-3" width="10" height="10" fill="#c8cccf" stroke="#222"/><path d="M-6-3-2-6H7V4L4 7M4-3 7-6" fill="#7a6a50" stroke="#222"/></g>
<g transform="translate(1263,560)"><path d="M-7-3 3-6 7-3V5L0 8-7 4Z" fill="#5f5f5a" stroke="#333"/><path d="M-7-3 0 0V8" fill="none" stroke="#ddd"/></g>
<g transform="translate(1100,583)"><circle r="7" fill="#f4f6f8" stroke="#8ea6bb"/><path d="M3-1H-1V-4L-5 0-1 4V1H3Z" fill="#6b8aa8"/></g>
<!-- draw row -->
<use href="#lin" transform="translate(1125,616)"/><use href="#lin" transform="translate(1147,616)"/>
<path d="M1161 620H1170M1172 610C1179 612 1179 620 1172 622" fill="none" stroke="#33536f" stroke-width="1.500"/><rect x="1161" y="618" width="3" height="3" fill="#2a75c4"/>
<path d="M1191 609 1198 614 1195 623H1187L1184 614Z" fill="#f4f6f8" stroke="#33536f" stroke-width="1.500"/>
<path d="M1207 612H1221L1219 622H1206Z" fill="#fff" stroke="#33536f" stroke-width="1.500"/>
<path d="M1228 624C1229 615 1233 611 1242 609" fill="none" stroke="#33536f" stroke-width="1.500"/><rect x="1227" y="622" width="3" height="3" fill="#2a75c4"/>
<circle cx="1257" cy="616" r="7" fill="#fff" stroke="#33536f" stroke-width="1.500"/><path d="M1257 616 1261 611" stroke="#33536f"/><path d="M1269 623h6l-3 3z" fill="#111"/>
<g transform="translate(1125,641)"><path d="M-6 5 5-7 7-5-3 7Z" fill="#e8d36a" stroke="#999"/><path d="M-9 8H6" stroke="#888"/></g>
<g transform="translate(1147,641)" fill="none" stroke="#33536f" stroke-width="1.500"><circle cx="-3" cy="-3" r="3.500"/><circle cx="3" cy="3" r="3.500"/></g>
<path d="M1167 648V634L1160 648ZM1171 648V634L1178 648Z" fill="#fff" stroke="#33536f" stroke-width="1.200"/>
<path d="M1184 647H1198V641H1193V635H1188V641H1184Z" fill="#f4f6f8" stroke="#33536f" stroke-width="1.300"/>
<path d="M1206 634H1212V640H1206ZM1214 634H1220V640H1214ZM1206 642H1212V648H1206ZM1214 642H1220V648H1214Z" fill="#fff" stroke="#33536f" stroke-width="1.300"/>
<path d="M1235 634V648M1228 641H1242" stroke="#33536f" stroke-width="2.400"/><path d="M1235 633 1232 637H1238ZM1235 649 1232 645H1238ZM1227 641 1231 638V644ZM1243 641 1239 638V644Z" fill="#33536f"/>
<path d="M1253 635A6.500 6.500 0 1 0 1262 637" fill="none" stroke="#33536f" stroke-width="2.400"/><path d="M1269 646h6" stroke="#111" stroke-width="1.500"/>

<!-- status right icons -->
<path d="M1149 758h7l-3.500 4z" fill="#111"/>
<g transform="translate(1177,761)"><path d="M-7 6 0-7 5 6Z" fill="none" stroke="#4a6ea5"/><circle cx="4" cy="-3" r="4" fill="#fff3a0" stroke="#b09a40"/></g>
<g transform="translate(1201,761)"><path d="M-7 6 5-7" stroke="#a8a8a0" stroke-width="3"/><circle cx="3" cy="-3" r="3" fill="#c0c0b8"/></g>
<g transform="translate(1225,761)"><rect x="-7" y="-1" width="10" height="8" fill="#c8a820" stroke="#5a4a10"/><path d="M1-2V-5A3 3 0 0 1 7-5V-2" fill="none" stroke="#b09a30" stroke-width="2"/></g>
<path d="M1244 761h7l-3.500 4z" fill="#111"/>
<rect x="1260.500" y="752.500" width="15" height="14" fill="#c1d2ee" stroke="#37536f"/>

<!-- taskbar icons -->
<g transform="translate(18,785)"><path d="M-8-7-1-5V-1L-8-2Z" fill="#e45a2a"/><path d="M1-5 8-7V-2L1-1Z" fill="#8ec23c"/><path d="M-8 0-1 1V6L-8 4Z" fill="#3a86e0"/><path d="M1 1 8 0V4L1 6Z" fill="#f4c430"/></g>
<rect x="117" y="778" width="15" height="15" fill="#1f7c8c" stroke="#dff"/><rect x="119" y="780" width="5" height="6" fill="#fff"/><path d="M125 787H130V792H125Z" fill="none" stroke="#fff"/>
<g transform="translate(1087,786)"><rect x="-8" y="-3" width="16" height="8" rx="1" fill="#eef" stroke="#123"/><path d="M-6-1H6M-6 1H6M-6 3H6" stroke="#345" stroke-dasharray="1 1"/></g>
<path d="M1107 778h6v3h-6zM1109 778v-2h6v4" fill="none" stroke="#fff"/><path d="M1107 790h6l-3 3z" fill="#fff"/>
<g transform="translate(1149,785)"><path d="M-6 2-2-5 6 1 2 6Z" fill="#d8e6c0" stroke="#2c8a3c"/></g>
<g transform="translate(1169,785)"><rect x="-7" y="-5" width="9" height="8" fill="#2d3f7a" stroke="#d8e0ee"/><path d="M0 0 6 7M6 0 0 7" stroke="#e02020" stroke-width="2"/></g>
<g transform="translate(1186,785)"><rect x="-7" y="-5" width="9" height="8" fill="#2d3f7a" stroke="#d8e0ee"/><path d="M0 0 6 7M6 0 0 7" stroke="#e02020" stroke-width="2"/></g>
<g transform="translate(1203,785)"><rect x="-6" y="-7" width="13" height="14" fill="#fff"/><path d="M-6-7H0V7H-6Z" fill="#e01010"/><path d="M6-7-1 0 6 7" fill="none" stroke="#111" stroke-width="2.400"/></g>
<g transform="translate(1220,785)"><circle r="6" fill="#8a97a8" stroke="#333"/><circle r="2" fill="#222"/></g>
</svg>
</body></html>
